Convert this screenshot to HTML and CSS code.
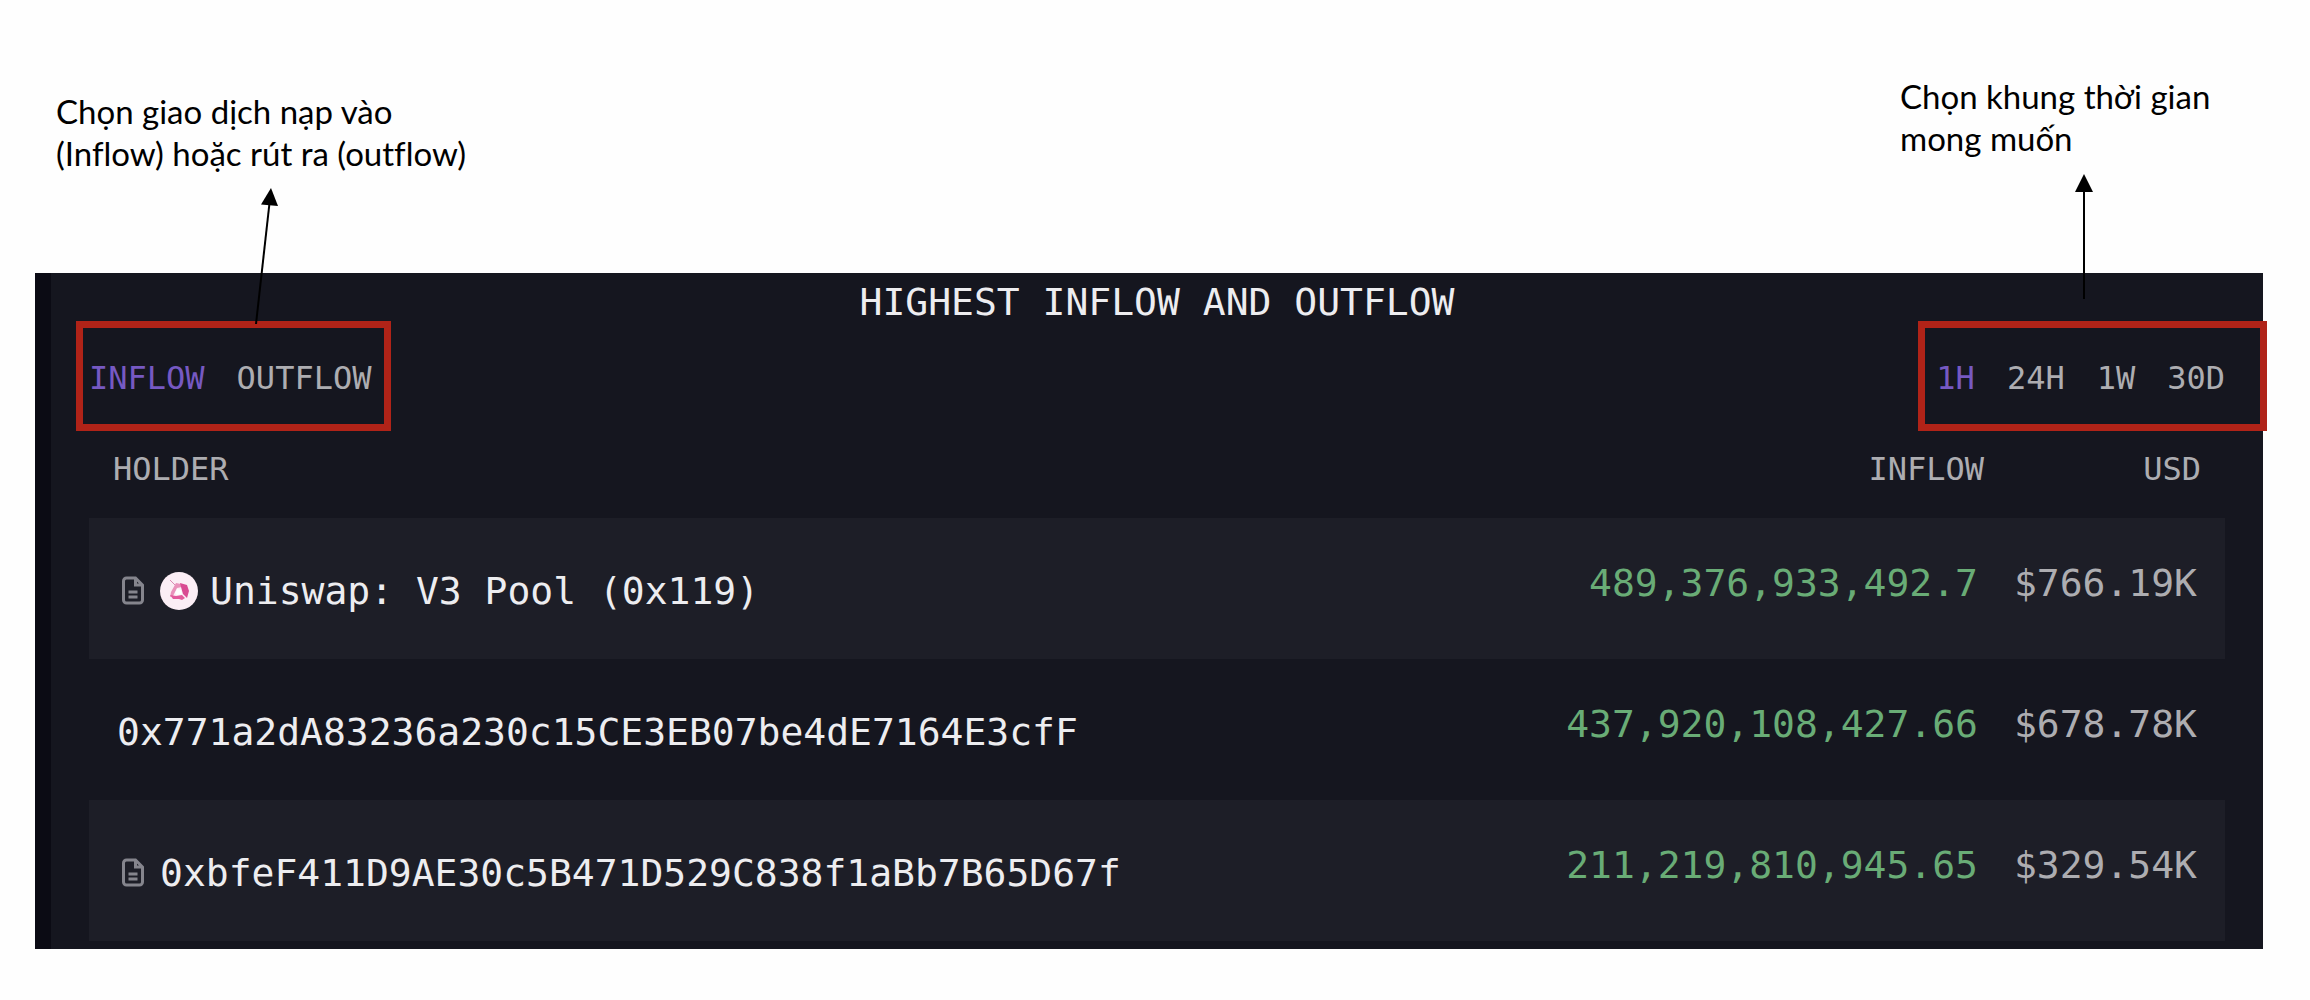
FILE: index.html
```html
<!DOCTYPE html>
<html lang="vi">
<head>
  <meta charset="UTF-8">
  <meta name="viewport" content="width=device-width, initial-scale=1">
  <title>Highest Inflow and Outflow</title>
  <link rel="stylesheet" href="styles.css">
</head>
<body>

  <div class="notes">
    <div class="note note-flow">
      <p>Chọn giao dịch nạp vào<br>(Inflow) hoặc rút ra (outflow)</p>
      <svg class="arrow" width="30" height="138" viewBox="0 0 30 138">
        <path d="M19.5 16L6 137" stroke="#000" stroke-width="2" fill="none"/>
        <path d="M21 1L28 19L11 17.500z"/>
      </svg>
    </div>
    <div class="note note-time">
      <p>Chọn khung thời gian<br>mong muốn</p>
      <svg class="arrow" width="30" height="138" viewBox="0 0 30 138">
        <path d="M15 16V126" stroke="#000" stroke-width="2" fill="none"/>
        <path d="M15 1L24 19H6z"/>
      </svg>
    </div>
  </div>

  <main class="panel">
    <h1>HIGHEST INFLOW AND OUTFLOW</h1>

    <div class="toolbar">
      <div class="tabs tabs-flow">
        <button type="button" class="active">INFLOW</button>
        <button type="button">OUTFLOW</button>
      </div>
      <div class="tabs tabs-time">
        <button type="button" class="active">1H</button>
        <button type="button">24H</button>
        <button type="button">1W</button>
        <button type="button">30D</button>
      </div>
    </div>

    <table>
      <thead>
        <tr>
          <th class="holder">HOLDER</th>
          <th class="amount">INFLOW</th>
          <th class="usd">USD</th>
        </tr>
      </thead>
      <tbody>
        <tr>
          <td class="holder">
            <div class="address">
              <svg class="doc" viewBox="0 0 32 32">
                <path d="M18.500 3H9.500a3 3 0 0 0-3 3v19a3 3 0 0 0 3 3h13a3 3 0 0 0 3-3V10zM18.500 3v7h7M11.500 17h9M11.500 22h9"/>
              </svg>
              <svg class="token" viewBox="0 0 38 38">
                <circle cx="19" cy="19" r="19" fill="#fbeef5"/>
                <path d="M10 8l6 6" stroke="#d98bb3" stroke-width="1"/>
                <path d="M16 11l5 1 1 3-5 1-4 8-3 1 1-5z" fill="#e992bb"/>
                <path d="M20 11l7 2 2 6-2 7-4-4-2-7z" fill="#d94a92"/>
                <path d="M10 23l6 1 6-1 3 3-3 2-3-1-6 0z" fill="#e25a9c"/>
                <path d="M17 17l4 1 1 4-5 1-2-2z" fill="#fff"/>
              </svg>
              <span>Uniswap: V3 Pool (0x119)</span>
            </div>
          </td>
          <td class="amount">489,376,933,492.7</td>
          <td class="usd">$766.19K</td>
        </tr>
        <tr>
          <td class="holder">
            <div class="address"><span>0x771a2dA83236a230c15CE3EB07be4dE7164E3cfF</span></div>
          </td>
          <td class="amount">437,920,108,427.66</td>
          <td class="usd">$678.78K</td>
        </tr>
        <tr>
          <td class="holder">
            <div class="address">
              <svg class="doc" viewBox="0 0 32 32">
                <path d="M18.500 3H9.500a3 3 0 0 0-3 3v19a3 3 0 0 0 3 3h13a3 3 0 0 0 3-3V10zM18.500 3v7h7M11.500 17h9M11.500 22h9"/>
              </svg>
              <span>0xbfeF411D9AE30c5B471D529C838f1aBb7B65D67f</span>
            </div>
          </td>
          <td class="amount">211,219,810,945.65</td>
          <td class="usd">$329.54K</td>
        </tr>
      </tbody>
    </table>
  </main>

</body>
</html>
```

FILE: styles.css
```css
* {
  box-sizing: border-box;
}
body {
  margin: 0;
  padding: 0 47px 48px 35px;
  background: #fefefe;
  font-family: "DejaVu Sans Mono", monospace;
}

/* notes above the panel */
.notes {
  display: flex;
  justify-content: space-between;
  align-items: flex-start;
  min-height: 273px;
  padding: 75px 36px 0 21px;
}
.note {
  position: relative;
  color: #000;
  font-family: Lato, "Open Sans", sans-serif;
  font-size: 33px;
  font-variant-ligatures: none;
  line-height: 42px;
}
.note-flow {
  padding-top: 15px;
}
.note-time {
  width: 327px;
}
.note p {
  margin: 0;
}
.arrow {
  position: absolute;
  z-index: 1;
  top: 98px;
  left: 169px;
}
.note-flow .arrow {
  top: 112px;
  left: 194px;
}

/* panel */
.panel {
  padding: 8px 38px;
  border-left: 16px solid #0b0b14;
  background: #15161f;
  color: #adadb1;
}
h1 {
  margin: 0;
  color: #ededf0;
  font-size: 38px;
  font-weight: normal;
  line-height: 42px;
  text-align: center;
}
.toolbar {
  display: flex;
  justify-content: space-between;
  margin: -2px -42px 0 -13px;
}
.tabs {
  display: flex;
  align-items: center;
  gap: 32px;
  height: 110px;
  padding: 4px 13px 0 6px;
  border: 7px solid #b02318;
}
.tabs-time {
  padding-right: 35px;
  padding-left: 11px;
}
.tabs button {
  padding: 0;
  border: 0;
  background: none;
  color: inherit;
  font: inherit;
  font-size: 32px;
  line-height: 40px;
  cursor: pointer;
}
.tabs .active {
  color: #7659c2;
}

/* holders */
table {
  width: 100%;
  border-collapse: collapse;
}
th {
  padding: 18px 24px 29px;
  font-size: 32px;
  font-weight: normal;
  line-height: 40px;
  text-align: right;
}
td {
  height: 141px;
  padding: 0 28px 12px;
  font-size: 38px;
  line-height: 48px;
  text-align: right;
}
tbody tr:nth-child(odd) {
  background: #1d1e27;
}
.holder {
  text-align: left;
}
td.holder {
  padding-top: 4px;
  padding-bottom: 0;
  color: #ededf0;
}
.amount {
  width: 400px;
  padding-right: 16px;
}
td.amount {
  padding-right: 22px;
  padding-left: 0;
  color: #69ac76;
}
.usd {
  width: 225px;
}
td.usd {
  padding-left: 0;
}
.address {
  display: flex;
  align-items: center;
}
.doc {
  width: 32px;
  height: 32px;
  margin-right: 11px;
  fill: none;
  stroke: #85858d;
  stroke-width: 3;
}
.token {
  width: 38px;
  height: 38px;
  margin-right: 12px;
}
```
